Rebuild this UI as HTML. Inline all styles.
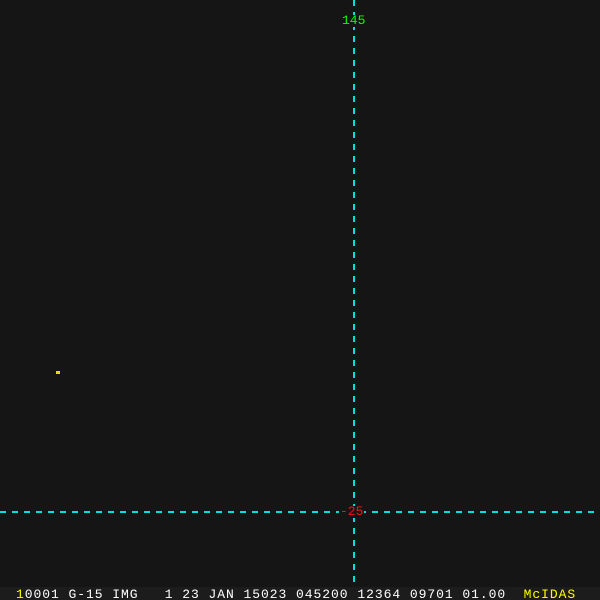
<!DOCTYPE html>
<html><head><style>
html,body{margin:0;padding:0;background:#141414;}
#c{position:relative;width:600px;height:600px;overflow:hidden;background:#151515;font-family:"Liberation Mono",monospace;}
.v{position:absolute;left:353px;top:0;width:2px;height:587px;background:repeating-linear-gradient(to bottom,#00e0e0 0 6px,transparent 6px 12px);}
.h{position:absolute;left:0;top:511px;width:600px;height:2px;background:repeating-linear-gradient(to right,#00e0e0 0 6px,transparent 6px 12px);}
.lbl{position:absolute;font-size:13px;line-height:12px;background:#151515;padding:0 1px;}
#bar{position:absolute;left:0;top:587px;width:600px;height:13px;background:#1c1c1c;color:#fff;font-size:13px;line-height:13px;letter-spacing:0.95px;white-space:pre;}
</style></head><body><div id="c">
<div class="v"></div><div class="h"></div>
<div class="lbl" style="left:341px;top:15px;color:#00ff00;">145</div>
<div class="lbl" style="left:339px;top:506px;color:#ff1010;">-25</div>
<div style="position:absolute;left:56px;top:371px;width:4px;height:3px;background:#e0e000;"></div>
<div id="bar"><span style="position:absolute;left:16px;top:1px;"><span style="color:#ff0">1</span>0001 G-15 IMG   1 23 JAN 15023 045200 12364 09701 01.00  <span style="color:#ff0">McIDAS</span></span></div>
</div></body></html>
